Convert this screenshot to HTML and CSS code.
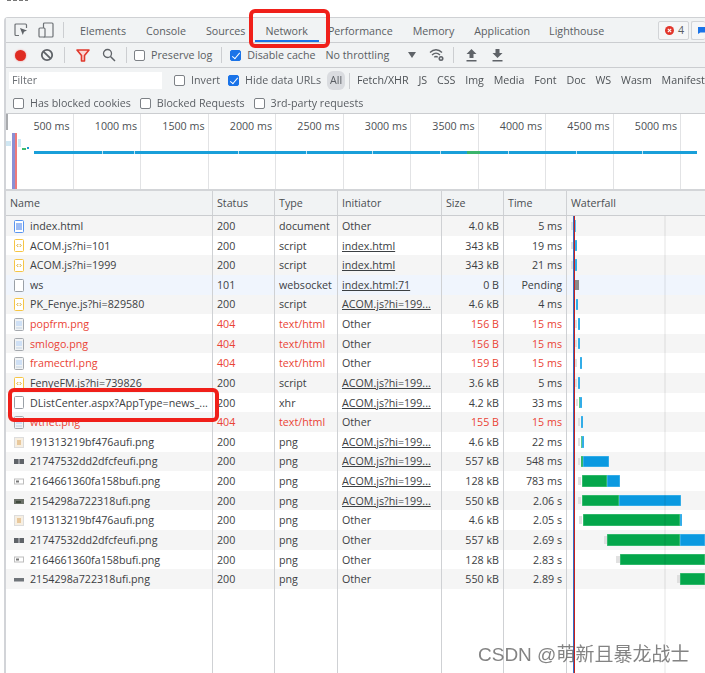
FILE: index.html
```html
<!DOCTYPE html>
<html lang="en">
<head>
<meta charset="utf-8">
<title>Network</title>
<link rel="stylesheet" href="styles.css">
</head>
<body>
<svg class="defs" width="0" height="0">
  <symbol id="i-html" viewBox="0 0 10 13"><rect x=".5" y=".5" width="9" height="12" rx="1" fill="#fff" stroke="#5a95f0"/><rect x="2" y="3" width="6" height="7" fill="#9dbcf4"/></symbol>
  <symbol id="i-js" viewBox="0 0 10 13"><rect x=".5" y=".5" width="9" height="12" rx="1" fill="#fff" stroke="#f6c544"/><path d="M4.3 5 2.8 6.5 4.3 8M5.7 5l1.500 1.500L5.700 8" fill="none" stroke="#d9a72c"/></symbol>
  <symbol id="i-doc" viewBox="0 0 10 13"><rect x=".5" y=".5" width="9" height="12" rx="1" fill="#fff" stroke="#9aa0a6"/></symbol>
  <symbol id="i-img" viewBox="0 0 10 13"><rect x=".5" y=".5" width="9" height="12" rx="1" fill="#f1f3f4" stroke="#a5a9ae"/><rect x="2" y="3" width="6" height="5" fill="#cfe0f5"/><path d="M2 10h6" stroke="#c3d3e4"/></symbol>
  <symbol id="t-a" viewBox="0 0 10 13"><rect x=".5" y="1.500" width="9" height="10" fill="#f7efe2" stroke="#ddd"/><rect x="3" y="4" width="4" height="5" fill="#e8c89c"/></symbol>
  <symbol id="t-b" viewBox="0 0 10 13"><rect y="4" width="10" height="5" fill="#5f6368"/><rect x="4.500" y="4" width="1" height="5" fill="#cfd2d6"/></symbol>
  <symbol id="t-c" viewBox="0 0 10 13"><rect x=".5" y="4" width="9" height="5" fill="#fff" stroke="#bdbdbd"/><rect x="2" y="5.500" width="3" height="2" fill="#777"/></symbol>
  <symbol id="t-d" viewBox="0 0 10 13"><rect y="4" width="10" height="5" fill="#6b7068"/><rect x="2" y="6" width="5" height="2" fill="#3f4a3c"/></symbol>
  <symbol id="t-e" viewBox="0 0 10 13"><rect y="5" width="10" height="3.500" fill="#70757a"/></symbol>
</svg>

<div class="top-gap"><span class="top-ink"></span></div>

<main class="devtools">
  <nav class="tabbar">
    <div class="tool-icons">
      <svg class="ic ic-inspect" width="14" height="14" viewBox="0 0 14 14"><path d="M5 12.500H2a1 1 0 0 1-1-1V2a1 1 0 0 1 1-1h9.500a1 1 0 0 1 1 1v3" fill="none" stroke="#6e7276" stroke-width="1.200"/><path d="m6 5 7 2.600-3 1.200L8.800 12z" fill="#5f6368"/></svg>
      <svg class="ic ic-device" width="16" height="16" viewBox="0 0 16 16"><rect x="5.500" y="1" width="9.500" height="14" rx="1" fill="none" stroke="#6e7276" stroke-width="1.200"/><rect x="1" y="6" width="6" height="9" rx="1" fill="#f1f3f4" stroke="#6e7276" stroke-width="1.200"/></svg>
    </div>
    <span class="divider tab-divider"></span>
    <span class="tab t1">Elements</span>
    <span class="tab t2">Console</span>
    <span class="tab t3">Sources</span>
    <span class="tab t4 active">Network</span>
    <span class="tab t5">Performance</span>
    <span class="tab t6">Memory</span>
    <span class="tab t7">Application</span>
    <span class="tab t8">Lighthouse</span>
    <span class="badge err"><svg width="9" height="9" viewBox="0 0 9 9"><circle cx="4.500" cy="4.500" r="4.500" fill="#e2352b"/><path d="m2.800 2.800 3.400 3.400m0-3.400L2.800 6.200" stroke="#fff" stroke-width="1.100"/></svg>4</span>
    <span class="badge msg"><svg width="9" height="9" viewBox="0 0 9 9"><path d="M0 0h9v7H3L0 9z" fill="#1a73e8"/></svg></span>
  </nav>

  <div class="toolbar">
    <span class="record"></span>
    <svg class="clear" width="14" height="14" viewBox="0 0 14 14"><circle cx="7" cy="7" r="5.200" fill="none" stroke="#5f6368" stroke-width="1.800"/><path d="m3.300 3.300 7.400 7.400" stroke="#5f6368" stroke-width="1.800"/></svg>
    <span class="divider d-a"></span>
    <svg class="funnel" width="14" height="13" viewBox="0 0 14 13"><path d="M1 1h12L8.500 6.500V12h-3V6.500z" fill="#fbd9d6" stroke="#e0392d" stroke-width="1.600" stroke-linejoin="round"/></svg>
    <svg class="search" width="14" height="14" viewBox="0 0 14 14"><circle cx="5.500" cy="5.500" r="4" fill="none" stroke="#5f6368" stroke-width="1.300"/><path d="m8.500 8.500 4.500 4.500" stroke="#5f6368" stroke-width="1.500"/></svg>
    <span class="divider d-b"></span>
    <label class="chk c-pres"><span class="box"></span>Preserve log</label>
    <span class="divider d-c"></span>
    <label class="chk c-cache"><span class="box on"></span>Disable cache</label>
    <span class="throttle">No throttling</span>
    <span class="caret"></span>
    <svg class="wifi" width="16" height="14" viewBox="0 0 16 14"><path d="M1 4.500C4.500 .8 9.500 .8 13 4.500M3 7c2.500-2.400 5.500-2.400 8 0M5.300 9.300c1-1 2.400-1 3.400 0" fill="none" stroke="#5f6368" stroke-width="1.300"/><circle cx="12" cy="10.500" r="2.500" fill="#5f6368"/><circle cx="12" cy="10.500" r=".9" fill="#f1f3f4"/></svg>
    <span class="divider d-d"></span>
    <svg class="arrow up" width="11" height="13" viewBox="0 0 11 13"><path d="M5.500 0 10.500 5H7.500v4h-4V5H.5zM.5 11h10v1.500H.5z" fill="#5f6368"/></svg>
    <svg class="arrow down" width="11" height="13" viewBox="0 0 11 13"><path d="M3.500 0h4v4h3l-5 5-5-5h3zM.5 11h10v1.500H.5z" fill="#5f6368"/></svg>
  </div>

  <div class="filterbar">
    <span class="filter-input">Filter</span>
    <label class="chk c-inv"><span class="box"></span>Invert</label>
    <label class="chk c-hide"><span class="box on"></span>Hide data URLs</label>
    <span class="pill">All</span>
    <span class="divider d-e"></span>
    <span class="ftype f1">Fetch/XHR</span>
    <span class="ftype">JS</span>
    <span class="ftype">CSS</span>
    <span class="ftype">Img</span>
    <span class="ftype">Media</span>
    <span class="ftype">Font</span>
    <span class="ftype">Doc</span>
    <span class="ftype">WS</span>
    <span class="ftype">Wasm</span>
    <span class="ftype">Manifest</span>
  </div>

  <div class="blockbar">
    <label class="chk"><span class="box"></span>Has blocked cookies</label>
    <label class="chk"><span class="box"></span>Blocked Requests</label>
    <label class="chk"><span class="box"></span>3rd-party requests</label>
  </div>

  <section class="overview">
    <span class="thumb"></span>
    <div class="ticks">
      <span class="tick">500 ms</span><span class="tick">1000 ms</span><span class="tick">1500 ms</span><span class="tick">2000 ms</span><span class="tick">2500 ms</span><span class="tick">3000 ms</span><span class="tick">3500 ms</span><span class="tick">4000 ms</span><span class="tick">4500 ms</span><span class="tick">5000 ms</span>
    </div>
    <span class="ov-line blue-l"></span>
    <span class="ov-line red-l"></span>
    <span class="ov-bit b1"></span><span class="ov-bit b2"></span><span class="ov-bit b3"></span><span class="ov-bit b4"></span>
    <span class="ov-main"></span>
    <span class="ov-gap" style="left:102px"></span><span class="ov-gap" style="left:134px"></span><span class="ov-gap" style="left:238px"></span><span class="ov-gap" style="left:306px"></span><span class="ov-gap" style="left:372px"></span><span class="ov-gap" style="left:440px"></span><span class="ov-gap" style="left:508px"></span><span class="ov-gap" style="left:576px"></span><span class="ov-gap" style="left:642px"></span>
    <span class="ov-green"></span>
  </section>

  <section class="table">
    <div class="row head">
      <span class="c name">Name</span><span class="c status">Status</span><span class="c type">Type</span><span class="c init">Initiator</span><span class="c size">Size</span><span class="c time">Time</span><span class="c wf">Waterfall</span>
    </div>

    <div class="row alt">
      <span class="c name"><svg class="fi"><use href="#i-html"/></svg>index.html</span><span class="c status">200</span><span class="c type">document</span><span class="c init">Other</span><span class="c size">4.0 kB</span><span class="c time">5 ms</span>
      <span class="c wf"><i class="w grey" style="left:4px;width:4px"></i><i class="w blue" style="left:8px;width:1px"></i></span>
    </div>
    <div class="row">
      <span class="c name"><svg class="fi"><use href="#i-js"/></svg>ACOM.js?hi=101</span><span class="c status">200</span><span class="c type">script</span><span class="c init"><u>index.html</u></span><span class="c size">343 kB</span><span class="c time">19 ms</span>
      <span class="c wf"><i class="w grey" style="left:4px;width:4px"></i><i class="w blue" style="left:8px;width:2px"></i></span>
    </div>
    <div class="row alt">
      <span class="c name"><svg class="fi"><use href="#i-js"/></svg>ACOM.js?hi=1999</span><span class="c status">200</span><span class="c type">script</span><span class="c init"><u>index.html</u></span><span class="c size">343 kB</span><span class="c time">21 ms</span>
      <span class="c wf"><i class="w grey" style="left:4px;width:4px"></i><i class="w blue" style="left:8px;width:2px"></i></span>
    </div>
    <div class="row ws">
      <span class="c name"><svg class="fi"><use href="#i-doc"/></svg>ws</span><span class="c status">101</span><span class="c type">websocket</span><span class="c init"><u>index.html:71</u></span><span class="c size">0 B</span><span class="c time">Pending</span>
      <span class="c wf"><i class="w dark" style="left:8px;width:4px"></i></span>
    </div>
    <div class="row alt">
      <span class="c name"><svg class="fi"><use href="#i-js"/></svg>PK_Fenye.js?hi=829580</span><span class="c status">200</span><span class="c type">script</span><span class="c init"><u>ACOM.js?hi=199...</u></span><span class="c size">4.6 kB</span><span class="c time">4 ms</span>
      <span class="c wf"><i class="w blue" style="left:9px;width:2px"></i></span>
    </div>
    <div class="row err-row">
      <span class="c name"><svg class="fi"><use href="#i-img"/></svg>popfrm.png</span><span class="c status">404</span><span class="c type">text/html</span><span class="c init">Other</span><span class="c size">156 B</span><span class="c time">15 ms</span>
      <span class="c wf"><i class="w grey" style="left:8px;width:2px"></i><i class="w blue" style="left:11px;width:2px"></i></span>
    </div>
    <div class="row alt err-row">
      <span class="c name"><svg class="fi"><use href="#i-img"/></svg>smlogo.png</span><span class="c status">404</span><span class="c type">text/html</span><span class="c init">Other</span><span class="c size">156 B</span><span class="c time">15 ms</span>
      <span class="c wf"><i class="w grey" style="left:8px;width:2px"></i><i class="w blue" style="left:11px;width:2px"></i></span>
    </div>
    <div class="row err-row">
      <span class="c name"><svg class="fi"><use href="#i-img"/></svg>framectrl.png</span><span class="c status">404</span><span class="c type">text/html</span><span class="c init">Other</span><span class="c size">159 B</span><span class="c time">15 ms</span>
      <span class="c wf"><i class="w grey" style="left:8px;width:2px"></i><i class="w blue" style="left:13px;width:2px"></i></span>
    </div>
    <div class="row alt">
      <span class="c name"><svg class="fi"><use href="#i-js"/></svg>FenyeFM.js?hi=739826</span><span class="c status">200</span><span class="c type">script</span><span class="c init"><u>ACOM.js?hi=199...</u></span><span class="c size">3.6 kB</span><span class="c time">5 ms</span>
      <span class="c wf"><i class="w grey" style="left:8px;width:2px"></i><i class="w blue" style="left:11px;width:2px"></i></span>
    </div>
    <div class="row">
      <span class="c name"><svg class="fi"><use href="#i-doc"/></svg>DListCenter.aspx?AppType=news_...</span><span class="c status">200</span><span class="c type">xhr</span><span class="c init"><u>ACOM.js?hi=199...</u></span><span class="c size">4.2 kB</span><span class="c time">33 ms</span>
      <span class="c wf"><i class="w grey" style="left:9px;width:2px"></i><i class="w green" style="left:12px;width:1px"></i><i class="w blue" style="left:13px;width:2px"></i></span>
    </div>
    <div class="row alt err-row">
      <span class="c name"><svg class="fi"><use href="#i-img"/></svg>wtnet.png</span><span class="c status">404</span><span class="c type">text/html</span><span class="c init">Other</span><span class="c size">155 B</span><span class="c time">15 ms</span>
      <span class="c wf"><i class="w grey" style="left:11px;width:2px"></i><i class="w blue" style="left:14px;width:2px"></i></span>
    </div>
    <div class="row">
      <span class="c name"><svg class="fi"><use href="#t-a"/></svg>191313219bf476aufi.png</span><span class="c status">200</span><span class="c type">png</span><span class="c init"><u>ACOM.js?hi=199...</u></span><span class="c size">4.6 kB</span><span class="c time">22 ms</span>
      <span class="c wf"><i class="w grey" style="left:11px;width:2px"></i><i class="w green" style="left:14px;width:1px"></i><i class="w blue" style="left:15px;width:2px"></i></span>
    </div>
    <div class="row alt">
      <span class="c name"><svg class="fi"><use href="#t-b"/></svg>21747532dd2dfcfeufi.png</span><span class="c status">200</span><span class="c type">png</span><span class="c init"><u>ACOM.js?hi=199...</u></span><span class="c size">557 kB</span><span class="c time">548 ms</span>
      <span class="c wf"><i class="w grey" style="left:11px;width:2px"></i><i class="w green" style="left:14px;width:2px"></i><i class="w blue" style="left:16px;width:26px"></i></span>
    </div>
    <div class="row">
      <span class="c name"><svg class="fi"><use href="#t-c"/></svg>2164661360fa158bufi.png</span><span class="c status">200</span><span class="c type">png</span><span class="c init"><u>ACOM.js?hi=199...</u></span><span class="c size">128 kB</span><span class="c time">783 ms</span>
      <span class="c wf"><i class="w grey" style="left:11px;width:3px"></i><i class="w green" style="left:15px;width:25px"></i><i class="w blue" style="left:40px;width:13px"></i></span>
    </div>
    <div class="row alt">
      <span class="c name"><svg class="fi"><use href="#t-d"/></svg>2154298a722318ufi.png</span><span class="c status">200</span><span class="c type">png</span><span class="c init"><u>ACOM.js?hi=199...</u></span><span class="c size">550 kB</span><span class="c time">2.06 s</span>
      <span class="c wf"><i class="w grey" style="left:11px;width:3px"></i><i class="w green" style="left:15px;width:37px"></i><i class="w blue" style="left:52px;width:62px"></i></span>
    </div>
    <div class="row">
      <span class="c name"><svg class="fi"><use href="#t-a"/></svg>191313219bf476aufi.png</span><span class="c status">200</span><span class="c type">png</span><span class="c init">Other</span><span class="c size">4.6 kB</span><span class="c time">2.05 s</span>
      <span class="c wf"><i class="w grey" style="left:12px;width:3px"></i><i class="w green" style="left:16px;width:97px"></i><i class="w blue" style="left:113px;width:2px"></i></span>
    </div>
    <div class="row alt">
      <span class="c name"><svg class="fi"><use href="#t-b"/></svg>21747532dd2dfcfeufi.png</span><span class="c status">200</span><span class="c type">png</span><span class="c init">Other</span><span class="c size">557 kB</span><span class="c time">2.69 s</span>
      <span class="c wf"><i class="w grey" style="left:37px;width:3px"></i><i class="w green" style="left:40px;width:73px"></i><i class="w blue" style="left:113px;width:25px"></i></span>
    </div>
    <div class="row">
      <span class="c name"><svg class="fi"><use href="#t-c"/></svg>2164661360fa158bufi.png</span><span class="c status">200</span><span class="c type">png</span><span class="c init">Other</span><span class="c size">128 kB</span><span class="c time">2.83 s</span>
      <span class="c wf"><i class="w grey" style="left:49px;width:4px"></i><i class="w green" style="left:53px;width:85px"></i></span>
    </div>
    <div class="row alt">
      <span class="c name"><svg class="fi"><use href="#t-e"/></svg>2154298a722318ufi.png</span><span class="c status">200</span><span class="c type">png</span><span class="c init">Other</span><span class="c size">550 kB</span><span class="c time">2.89 s</span>
      <span class="c wf"><i class="w grey" style="left:110px;width:3px"></i><i class="w green" style="left:113px;width:25px"></i></span>
    </div>

    <div class="row filler">
      <span class="c name"></span><span class="c status"></span><span class="c type"></span><span class="c init"></span><span class="c size"></span><span class="c time"></span><span class="c wf"></span>
    </div>

    <span class="wf-mark grid"></span>
    <span class="wf-mark dom"></span>
    <span class="wf-mark load"></span>
  </section>
</main>

<span class="callout callout-tab"></span>
<span class="callout callout-row"></span>
<span class="watermark">CSDN @萌新且暴龙战士</span>
</body>
</html>
```

FILE: styles.css
```css
* { box-sizing: border-box; }
html, body { margin: 0; height: 100%; }
body {
  position: relative;
  width: 705px;
  height: 673px;
  overflow: hidden;
  background: #fff;
  color: #3c4043;
  font: 10.700px/1 "Open Sans", "Noto Sans", sans-serif;
  display: flex;
  flex-direction: column;
}
.defs { position: absolute; }

.top-gap { height: 17px; flex: none; overflow: hidden; padding-left: 7px; }
.top-ink {
  display: block;
  width: 21px;
  height: 1px;
  background: repeating-linear-gradient(90deg, #777 0 4px, #fff 4px 6px);
}

.devtools {
  flex: 1;
  min-height: 0;
  margin-left: 4px;
  border-top: 1px solid #cfd1d4;
  border-left: 2px solid #d2d4d8;
  border-top-left-radius: 4px;
  display: flex;
  flex-direction: column;
  filter: blur(.3px);
}

.divider { width: 1px; height: 16px; background: #ccced1; flex: none; }

/* tab strip */
.tabbar {
  height: 25px;
  flex: none;
  display: flex;
  align-items: center;
  background: #f1f3f4;
  border-bottom: 1px solid #cbcdd0;
  color: #5a5e63;
  padding-left: 8px;
}
.tool-icons { display: flex; align-items: center; gap: 10px; }
.tab-divider { margin-left: 9px; }
.tab { position: relative; height: 24px; line-height: 26px; flex: none; }
.t1 { margin-left: 16px; }
.t2, .t3, .t4, .t5, .t6, .t7, .t8 { margin-left: 20px; }
.t8 { margin-left: 19px; }
.active::after {
  content: "";
  position: absolute;
  left: -10px;
  right: -11px;
  bottom: 0;
  height: 2px;
  background: #1a73e8;
}
.badge {
  height: 19px;
  flex: none;
  display: flex;
  align-items: center;
  gap: 4px;
  border: 1px solid #d2d4d7;
  border-radius: 2px;
  background: #f5f6f7;
}
.err { margin-left: auto; width: 31px; padding-left: 6px; }
.msg { width: 14px; margin-left: 2px; padding-left: 6px; border-right: 0; }

/* toolbars */
.toolbar {
  height: 25px;
  flex: none;
  display: flex;
  align-items: center;
  background: #f1f3f4;
  border-bottom: 1px solid #cbcdd0;
  color: #5a5e63;
  padding-left: 9px;
}
.record {
  width: 11px;
  height: 11px;
  border-radius: 50%;
  background: #df2c22;
  box-shadow: 0 0 2px #e88;
  flex: none;
}
.clear { margin-left: 14px; flex: none; }
.d-a { margin-left: 10px; }
.funnel { margin-left: 11px; flex: none; }
.search { margin-left: 12px; flex: none; }
.d-b { margin-left: 10px; }
.chk { display: flex; align-items: center; gap: 6px; flex: none; color: #5a5e63; white-space: nowrap; }
.box {
  width: 11px;
  height: 11px;
  border: 1px solid #7d8186;
  border-radius: 2px;
  background: #fff;
  flex: none;
  display: block;
}
.box.on {
  border-color: #1a73e8;
  background: #1a73e8;
  position: relative;
}
.box.on::after {
  content: "";
  position: absolute;
  left: 3px;
  top: 0;
  width: 3px;
  height: 7px;
  border: solid #fff;
  border-width: 0 1.500px 1.500px 0;
  transform: rotate(40deg);
}
.c-pres { margin-left: 7px; }
.d-c { margin-left: 9px; }
.c-cache { margin-left: 8px; }
.throttle { margin-left: 10px; flex: none; }
.caret {
  margin-left: 19px;
  width: 0;
  height: 0;
  flex: none;
  border: 4px solid transparent;
  border-top: 6px solid #5f6368;
  border-bottom: 0;
}
.wifi { margin-left: 13px; flex: none; }
.d-d { margin-left: 8px; }
.up { margin-left: 12px; flex: none; }
.down { margin-left: 15px; flex: none; }

.filterbar {
  height: 25px;
  flex: none;
  display: flex;
  align-items: center;
  background: #f1f3f4;
  color: #5a5e63;
  padding-left: 3px;
}
.filter-input {
  width: 153px;
  height: 17px;
  line-height: 17px;
  padding-left: 3px;
  background: #fff;
  color: #6b6f74;
  flex: none;
}
.c-inv { margin-left: 12px; }
.c-hide { margin-left: 8px; }
.pill {
  margin-left: 6px;
  width: 18px;
  height: 19px;
  line-height: 19px;
  text-align: center;
  border-radius: 6px;
  background: #dadce0;
  flex: none;
}
.d-e { margin-left: 4px; }
.ftype { margin-left: 9.800px; flex: none; color: #4f5357; }
.ftype.f1 { margin-left: 7px; }

.blockbar {
  height: 21px;
  flex: none;
  display: flex;
  align-items: center;
  gap: 9px;
  padding-left: 7px;
  background: #f1f3f4;
  border-bottom: 1px solid #cbcdd0;
}

/* overview */
.overview {
  position: relative;
  height: 77px;
  flex: none;
  background: #fff;
  border-bottom: 2px solid #d3d5d8;
}
.thumb { position: absolute; left: 0; top: 0; width: 2px; height: 16px; background: #a9abae; }
.ticks { display: flex; height: 100%; }
.tick {
  width: 67.500px;
  flex: none;
  height: 100%;
  border-right: 1px solid #e2e3e5;
  text-align: right;
  padding: 7px 3px 0 0;
  color: #4c5054;
  white-space: nowrap;
}
.ov-line { position: absolute; top: 19px; bottom: 0; width: 2px; }
.blue-l { left: 6px; background: #8b8fd4; width: 3px; }
.red-l { left: 9px; background: #ef7a7a; }
.ov-bit { position: absolute; background: #cdeaf6; }
.b1 { left: 0; top: 27px; width: 5px; height: 5px; background: #cfe6f2; }
.b2 { left: 12px; top: 25px; width: 3px; height: 8px; }
.b3 { left: 16px; top: 34px; width: 4px; height: 2px; background: #3cba6f; }
.b4 { left: 21px; top: 33px; width: 2px; height: 2px; background: #1d9ad6; }
.ov-main {
  position: absolute;
  left: 28px;
  right: 8px;
  top: 37px;
  height: 3px;
  background: #199fd9;
}
.ov-gap { position: absolute; top: 37px; width: 1px; height: 3px; background: #bfe3f2; margin-left: -6px; }
.ov-green { position: absolute; left: 461px; top: 37px; width: 13px; height: 3px; background: #3bb56c; }

/* request table */
.table {
  position: relative;
  flex: 1;
  min-height: 0;
  display: flex;
  flex-direction: column;
  overflow: hidden;
  color: #3c4043;
}
.row { display: flex; height: 19.630px; flex: none; background: #fff; }
.row.alt { background: #f5f5f5; }
.row.ws { background: #f0f5fd; }
.row.head { height: 25px; background: #f1f3f4; border-bottom: 1px solid #cbcdd0; color: #4a4e52; }
.row.filler { flex: 1; min-height: 0; }
.err-row .name, .err-row .status, .err-row .type, .err-row .time, .err-row .size { color: #ea4335; }
.c {
  flex: none;
  display: flex;
  align-items: center;
  padding: 0 4px;
  white-space: nowrap;
  overflow: hidden;
  border-right: 1px solid #cfd1d4;
}
.row:not(.head) .c { padding-top: 1px; }
.name { width: 207px; }
.status { width: 62px; }
.type { width: 63px; }
.init { width: 104px; }
.size { width: 62px; }
.time { width: 63px; }
.row:not(.head) .size, .row:not(.head) .time { justify-content: flex-end; }
.row:not(.head) .name { padding-right: 0; }
.wf { position: relative; flex: 1; border-right: 0; overflow: visible; }
.fi { width: 10px; height: 13px; margin: 0 6px 0 4px; flex: none; }

.w { position: absolute; top: 4px; bottom: 4px; display: block; }
.grey { background: #d9d9d9; top: 6px; bottom: 6px; opacity: .8; }
.dark { background: #8a8a8a; top: 5px; bottom: 5px; }
.blue { background: #0a99e0; box-shadow: inset 0 0 0 .5px #5cc0ee; }
.green { background: #04a64b; box-shadow: inset 0 0 0 .5px #5cc98c; }

.wf-mark { position: absolute; top: 25px; bottom: 0; width: 1px; }
.grid { left: 658px; width: 2px; background: rgba(0, 0, 0, .05); }
.dom { left: 567px; background: #2f6fc4; }
.load { left: 568px; background: #c5211f; }

/* annotations layered over the screenshot */
.callout { position: absolute; border: 4px solid #f0201a; border-radius: 6px; }
.callout-tab { left: 249px; top: 9px; width: 81px; height: 39px; }
.callout-row { left: 8px; top: 388px; width: 211px; height: 34px; }
.watermark {
  position: absolute;
  left: 478px;
  top: 644px;
  font: 19px/21px "Liberation Sans", "Noto Sans CJK SC", sans-serif;
  color: rgba(90, 90, 90, .75);
  white-space: nowrap;
}
```
